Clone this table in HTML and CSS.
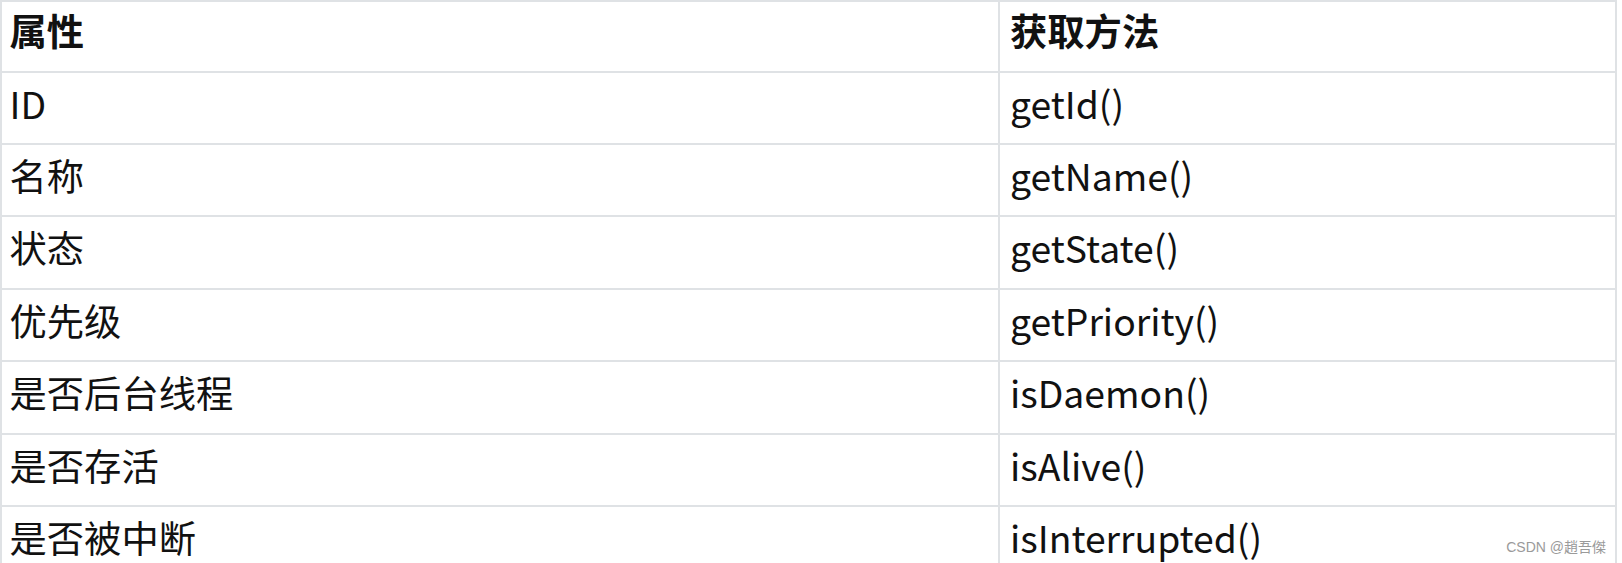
FILE: index.html
```html
<!DOCTYPE html>
<html lang="zh-CN">
<head>
<meta charset="utf-8">
<title>线程属性</title>
<link rel="stylesheet" href="styles.css">
</head>
<body>
<div class="page">
  <table class="props">
    <thead>
      <tr><th class="col-name">属性</th><th class="col-method">获取方法</th></tr>
    </thead>
    <tbody>
      <tr><td class="col-name">ID</td><td class="col-method">getId()</td></tr>
      <tr><td class="col-name">名称</td><td class="col-method">getName()</td></tr>
      <tr><td class="col-name">状态</td><td class="col-method">getState()</td></tr>
      <tr><td class="col-name">优先级</td><td class="col-method">getPriority()</td></tr>
      <tr><td class="col-name">是否后台线程</td><td class="col-method">isDaemon()</td></tr>
      <tr><td class="col-name">是否存活</td><td class="col-method">isAlive()</td></tr>
      <tr><td class="col-name">是否被中断</td><td class="col-method">isInterrupted()</td></tr>
    </tbody>
  </table>
  <div class="watermark">CSDN @趙吾傑</div>
</div>
</body>
</html>
```

FILE: styles.css
```css
html, body {
  margin: 0;
  padding: 0;
  background: #ffffff;
}

.page {
  position: relative;
  width: 1622px;
  height: 563px;
  overflow: hidden;
}

.props {
  border-collapse: collapse;
  width: 1617px;
  table-layout: fixed;
  font-family: "Noto Sans CJK SC", "Noto Sans", sans-serif;
  font-size: 37.3px;
  line-height: 44px;
  color: #111111;
}

.props th,
.props td {
  border: 2px solid #dfe2e5;
  padding: 0 0 0 10px;
  text-align: left;
  vertical-align: top;
  white-space: nowrap;
}

.props th {
  font-weight: 700;
  padding-top: 5.6px;
  padding-bottom: 19px;
}

.props td {
  padding-top: 8px;
  padding-bottom: 18.4px;
}

.props .col-name {
  padding-left: 7.5px;
}

.props th.col-name {
  width: 988.5px;
}

.watermark {
  position: absolute;
  right: 16px;
  bottom: 7px;
  font-family: "Liberation Sans", "Noto Sans CJK TC", sans-serif;
  font-size: 14px;
  color: #9a9a9a;
}
```
